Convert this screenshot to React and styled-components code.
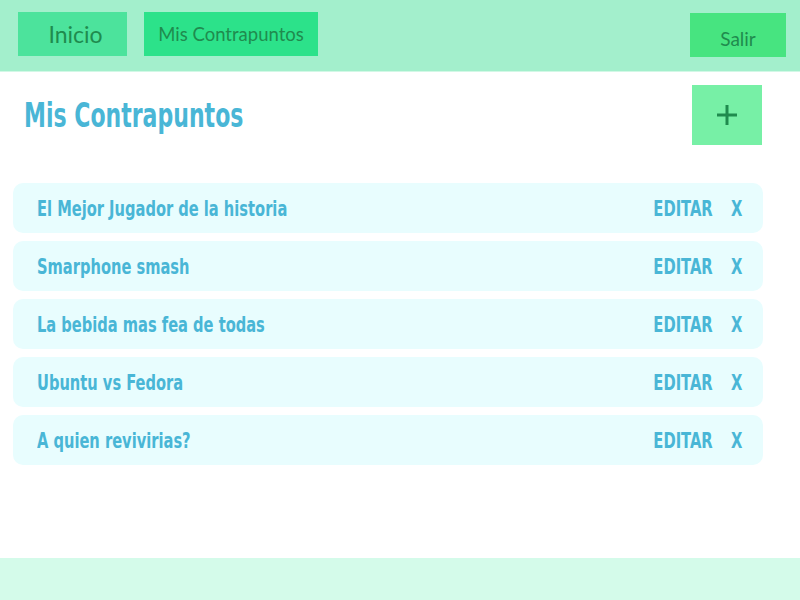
import React from 'react'
import styled, { createGlobalStyle } from 'styled-components'

const GlobalStyle = createGlobalStyle`
  html, body { margin: 0; padding: 0; height: 100%; }
  body { background: #ffffff; font-family: "Lato", "Liberation Sans", sans-serif; }
  #root { height: 100%; }
`

const items = [
  'El Mejor Jugador de la historia',
  'Smarphone smash',
  'La bebida mas fea de todas',
  'Ubuntu vs Fedora',
  'A quien revivirias?',
]

function App() {
  return (
    <>
      <GlobalStyle />
      <Page>
        <Header>
          <NavButton $bg="#4ce39c" $w={109} $size={23} $pad="0 0 0 6px">Inicio</NavButton>
          <NavButton $bg="#2ce28a" $w={174} $size={18.5} style={{ marginLeft: 17 }}>Mis Contrapuntos</NavButton>
          <Spacer />
          <NavButton $bg="#47e480" $w={96} $size={19} $pad="7px 0 0" $low>Salir</NavButton>
        </Header>
        <Main>
          <TitleRow>
            <Title>Mis Contrapuntos</Title>
            <AddButton aria-label="nuevo">
              <svg width="20" height="20" viewBox="0 0 20 20">
                <path d="M10 0v20M0 10h20" stroke="#1f8b4e" strokeWidth="3" />
              </svg>
            </AddButton>
          </TitleRow>
          <List>
            {items.map((t) => (
              <Row key={t}>
                <RowTitle>{t}</RowTitle>
                <Actions>
                  <Action>EDITAR</Action>
                  <Action>X</Action>
                </Actions>
              </Row>
            ))}
          </List>
        </Main>
        <Footer />
      </Page>
    </>
  )
}

export default App

const Page = styled.div`
  display: flex;
  flex-direction: column;
  min-height: 100vh;
`

const Header = styled.header`
  display: flex;
  align-items: flex-start;
  height: 72px;
  padding: 12px 14px 0 18px;
  background: #a3efcc;
  border-bottom: 1px solid #d2f8e6;
  box-sizing: border-box;
`

const Spacer = styled.div`
  flex: 1;
`

const NavButton = styled.button`
  width: ${(p) => p.$w}px;
  height: 44px;
  margin-top: ${(p) => (p.$low ? '1px' : '0')};
  border: none;
  background: ${(p) => p.$bg};
  color: #1f8b4e;
  font-family: "Lato", "Liberation Sans", sans-serif;
  font-size: ${(p) => p.$size}px;
  padding: ${(p) => p.$pad || '0'};
  cursor: pointer;
`

const Main = styled.main`
  flex: 1;
`

const TitleRow = styled.div`
  display: flex;
  align-items: center;
  justify-content: space-between;
  padding: 13px 38px 0 24px;
`

const Condensed = styled.span`
  display: inline-block;
  font-family: "DejaVu Sans Condensed", "DejaVu Sans", sans-serif;
  font-weight: bold;
  color: #49b6d6;
  white-space: nowrap;
`

const Title = styled(Condensed).attrs({ as: 'h1' })`
  margin: 0;
  font-size: 34px;
  transform: scaleX(0.72);
  transform-origin: left center;
`

const AddButton = styled.button`
  width: 70px;
  height: 60px;
  border: none;
  background: #77f0a6;
  display: flex;
  align-items: center;
  justify-content: center;
  cursor: pointer;
`

const List = styled.ul`
  list-style: none;
  margin: 38px 37px 0 13px;
  padding: 0;
  display: flex;
  flex-direction: column;
  gap: 8px;
`

const Row = styled.li`
  display: flex;
  align-items: center;
  justify-content: space-between;
  height: 50px;
  padding: 2px 21px 0 24px;
  box-sizing: border-box;
  border-radius: 10px;
  background: #e8fdfe;
`

const RowTitle = styled(Condensed)`
  font-size: 20.5px;
  transform: scaleX(0.795);
  transform-origin: left center;
`

const Actions = styled.div`
  display: flex;
  gap: 23px;
  transform: scaleX(0.8);
  transform-origin: right center;
`

const Action = styled(Condensed)`
  font-size: 20.5px;
  cursor: pointer;
`

const Footer = styled.footer`
  height: 42px;
  background: #d4fbea;
`
